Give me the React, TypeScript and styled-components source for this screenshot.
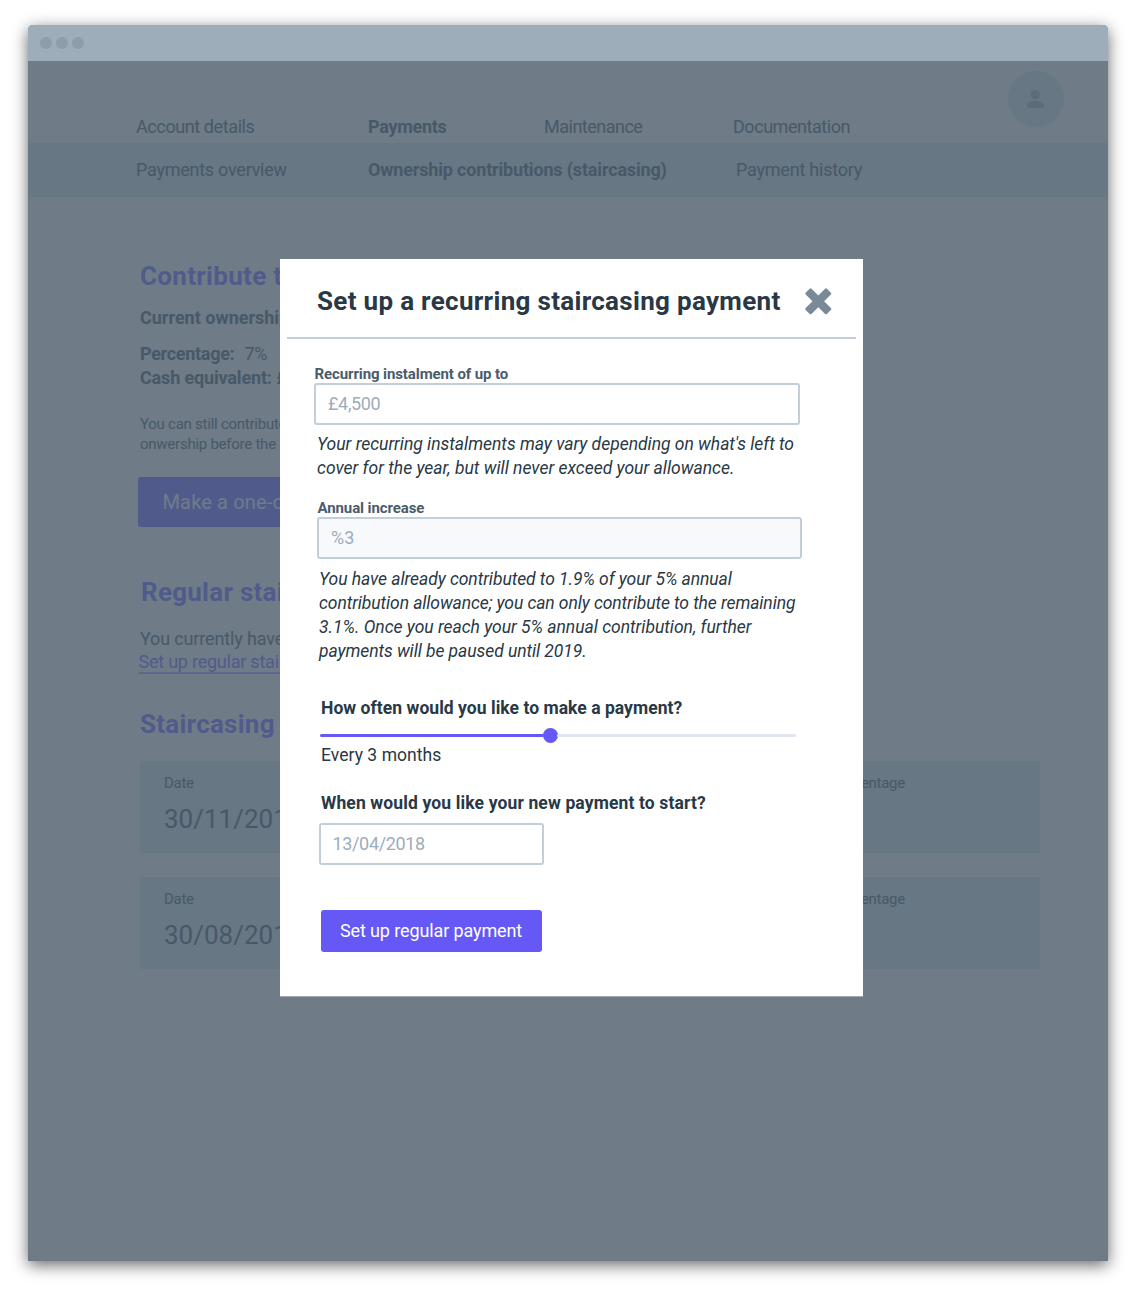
import React from "react";
import styled, { createGlobalStyle } from "styled-components";

const Global = createGlobalStyle`
  * { box-sizing: border-box; }
  body {
    margin: 0;
    background: #fff;
    font-family: Roboto, "Liberation Sans", sans-serif;
  }
  h1, h2, h3, p { margin: 0; }
`;

const c = {
  ink: "#283845",
  label: "#4a5c6c",
  line: "#c2ced9",
  hint: "#9dadbb",
  accent: "#6558f5",
  shade: "#6f7b86",
  shadeBlue: "#677783",
  shadeText: "#475969",
  shadeAccent: "#515b8b",
};

const Stage = styled.div`
  padding: 25px 28px 31px;
  height: 1292px;
  overflow: hidden;
`;

const Browser = styled.div`
  position: relative;
  width: 1080px;
  height: 1236px;
  background: ${c.shade};
  border-radius: 5px 5px 0 0;
  box-shadow: 0 4px 16px rgba(0, 0, 0, 0.6);
`;

const TitleBar = styled.div`
  display: flex;
  align-items: center;
  gap: 4px;
  height: 36px;
  padding-left: 12px;
  background: #9dadb9;
  border-radius: 5px 5px 0 0;
`;

const Dot = styled.i`
  width: 12px;
  height: 12px;
  border-radius: 50%;
  background: #8c9dac;
`;

const Header = styled.header`
  display: flex;
  justify-content: space-between;
  height: 82px;
  padding: 10px 44px 0 108px;
`;

const Nav = styled.nav`
  display: flex;
  padding-top: 44px;
`;

const SubNav = styled.nav`
  display: flex;
  height: 54px;
  padding: 15px 0 0 108px;
  background: ${c.shadeBlue};
`;

const NavItem = styled.a<{ $w: number; $ls?: number; $on?: boolean }>`
  width: ${(p) => p.$w}px;
  font-size: 18px;
  line-height: 24px;
  white-space: nowrap;
  color: ${c.shadeText};
  font-weight: ${(p) => (p.$on ? 700 : 400)};
  letter-spacing: ${(p) => p.$ls ?? 0}px;
`;

const Avatar = styled.div`
  display: flex;
  align-items: center;
  justify-content: center;
  width: 56px;
  height: 56px;
  border-radius: 50%;
  background: ${c.shadeBlue};
`;

const Main = styled.main`
  width: 1012px;
  padding: 63px 0 0 112px;
`;

const Heading = styled.h2<{ $top?: number; $ls?: number; $indent?: number }>`
  margin: ${(p) => p.$top ?? 0}px 0 0 ${(p) => p.$indent ?? 0}px;
  font-size: 26px;
  line-height: 32px;
  font-weight: 700;
  color: ${c.shadeAccent};
  letter-spacing: ${(p) => p.$ls ?? 0}px;
`;

const Text = styled.p<{ $top?: number; $ls?: number; $small?: boolean }>`
  margin-top: ${(p) => p.$top ?? 0}px;
  font-size: ${(p) => (p.$small ? 15 : 18)}px;
  line-height: ${(p) => (p.$small ? 20 : 24)}px;
  color: ${c.shadeText};
  letter-spacing: ${(p) => p.$ls ?? 0}px;
`;

const Term = styled.b<{ $gap?: number }>`
  margin-right: ${(p) => p.$gap ?? 0}px;
`;

const PageButton = styled.button`
  display: block;
  margin: 23px 0 0 -2.5px;
  width: 260px;
  height: 50px;
  padding: 0 0 0 25px;
  border: 0;
  border-radius: 3px;
  background: ${c.shadeAccent};
  color: #6f7c88;
  font: 400 20px/50px Roboto, "Liberation Sans", sans-serif;
  letter-spacing: 0.15px;
  text-align: left;
`;

const PageLink = styled.a`
  display: block;
  width: 150px;
  margin: -1px 0 0 -1.5px;
  height: 24px;
  font-size: 18px;
  line-height: 24px;
  letter-spacing: -0.23px;
  white-space: nowrap;
  color: ${c.shadeAccent};
  border-bottom: 2px solid #5d678b;
`;

const Card = styled.section<{ $top: number }>`
  display: grid;
  grid-template-columns: 334px 334px 1fr;
  width: 900px;
  height: 92px;
  margin-top: ${(p) => p.$top}px;
  padding: 12px 24px 0;
  background: ${c.shadeBlue};
`;

const CardLabel = styled.div`
  font-size: 15px;
  line-height: 20px;
  letter-spacing: -0.3px;
  color: ${c.shadeText};
`;

const CardValue = styled.div`
  margin-top: 10px;
  font-size: 26px;
  line-height: 32px;
  color: ${c.shadeText};
`;

const Modal = styled.div`
  position: absolute;
  left: 252px;
  top: 234px;
  width: 583px;
  height: 737px;
  background: #fff;
  box-shadow: 0 1px 0 #a3acb4;
`;

const ModalHeader = styled.div`
  display: flex;
  justify-content: space-between;
  height: 80px;
  margin: 0 7px;
  padding: 26px 23.5px 0 30px;
  border-bottom: 2px solid ${c.line};
  svg { margin-top: 3px; }
`;

const ModalTitle = styled.h1`
  font-size: 26px;
  line-height: 32px;
  font-weight: 700;
  color: ${c.ink};
  white-space: nowrap;
  letter-spacing: 0.31px;
`;

const ModalBody = styled.form`
  display: flex;
  flex-direction: column;
  align-items: flex-start;
  padding: 25px 0 0 34px;
`;

const Field = styled.div<{ $top?: number; $x?: number }>`
  margin: ${(p) => p.$top ?? 0}px 0 0 ${(p) => p.$x ?? 0}px;
`;

const Label = styled.label`
  display: block;
  height: 19px;
  margin-left: 0.5px;
  font-size: 15px;
  line-height: 20px;
  font-weight: 700;
  color: ${c.label};
  letter-spacing: -0.1px;
`;

const Input = styled.div<{ $w: number; $muted?: boolean; $ls?: number }>`
  width: ${(p) => p.$w}px;
  height: 42px;
  padding-left: 12px;
  border: 2px solid ${c.line};
  border-radius: 3px;
  background: ${(p) => (p.$muted ? "#f7f9fb" : "#fff")};
  font-size: 18px;
  line-height: 38px;
  color: ${c.hint};
  letter-spacing: ${(p) => p.$ls ?? 0}px;
`;

const Help = styled.p<{ $top: number; $x: number }>`
  margin: ${(p) => p.$top}px 0 0 ${(p) => p.$x}px;
  font-size: 17.5px;
  line-height: 24px;
  font-style: italic;
  color: ${c.ink};
`;

const Line = styled.span<{ $ls?: number }>`
  display: block;
  white-space: nowrap;
  letter-spacing: ${(p) => p.$ls ?? 0}px;
`;

const Question = styled.h3<{ $top: number; $ls?: number }>`
  margin: ${(p) => p.$top}px 0 0 7px;
  font-size: 17.5px;
  line-height: 24px;
  font-weight: 700;
  color: ${c.ink};
  letter-spacing: ${(p) => p.$ls ?? 0}px;
`;

const Slider = styled.div`
  display: flex;
  align-items: center;
  width: 476.5px;
  height: 15px;
  margin: 8px 0 0 5.5px;
`;

const Track = styled.div<{ $on?: boolean }>`
  flex: ${(p) => (p.$on ? "0 0 224.5px" : "1")};
  height: 3px;
  border-radius: 2px;
  background: ${(p) => (p.$on ? c.accent : "#e0e6ed")};
`;

const Thumb = styled.div`
  width: 15px;
  height: 15px;
  margin: 0 -1px;
  border-radius: 50%;
  background: ${c.accent};
`;

const SliderValue = styled.div`
  margin: 0 0 0 7px;
  font-size: 17.5px;
  line-height: 24px;
  color: ${c.ink};
  letter-spacing: 0.05px;
`;

const Submit = styled.button`
  width: 221px;
  height: 42px;
  margin: 45px 0 0 6.5px;
  padding: 0;
  border: 0;
  border-radius: 3px;
  background: ${c.accent};
  color: #fff;
  font: 400 18px/42px Roboto, "Liberation Sans", sans-serif;
  letter-spacing: -0.12px;
`;

const PersonIcon = () => (
  <svg width="20" height="20" viewBox="0 0 20 20" fill="#5b6c7b">
    <circle cx="9.4" cy="5.6" r="4.700" />
    <path d="M.9 18v-1.200c0-3 4.200-5.100 8.500-5.100s8.500 2.100 8.500 5.100v1.200c0 .5-.3.9-.9.9H1.800c-.6 0-.9-.4-.9-.9z" />
  </svg>
);

const CloseIcon = () => (
  <svg width="28" height="27" viewBox="0 0 28 27" fill="#7a8997">
    <rect x="-1.700" y="9.200" width="30" height="8.200" rx="1.300" transform="rotate(45 13.300 13.300)" />
    <rect x="-1.700" y="9.200" width="30" height="8.200" rx="1.300" transform="rotate(-45 13.300 13.300)" />
  </svg>
);

const contributions = ["30/11/2017", "30/08/2017"];

export default function App() {
  return (
    <Stage>
      <Global />
      <Browser>
        <TitleBar>
          <Dot />
          <Dot />
          <Dot />
        </TitleBar>
        <Header>
          <Nav>
            <NavItem $w={232} $ls={-0.4}>Account details</NavItem>
            <NavItem $w={176} $ls={-0.3} $on>Payments</NavItem>
            <NavItem $w={189} $ls={-0.5}>Maintenance</NavItem>
            <NavItem $w={130} $ls={-0.45}>Documentation</NavItem>
          </Nav>
          <Avatar>
            <PersonIcon />
          </Avatar>
        </Header>
        <SubNav>
          <NavItem $w={232} $ls={-0.25}>Payments overview</NavItem>
          <NavItem $w={368} $ls={-0.17} $on>Ownership contributions (staircasing)</NavItem>
          <NavItem $w={130} $ls={-0.22}>Payment history</NavItem>
        </SubNav>
        <Main>
          <Heading $ls={0.3}>Contribute to</Heading>
          <Text $top={14}><Term>Current ownership</Term></Text>
          <Text $top={12} $ls={-0.3}><Term $gap={6}>Percentage:</Term> 7%</Text>
          <Text $ls={-0.16}><Term $gap={4.5}>Cash equivalent:</Term>£</Text>
          <Text $top={24} $ls={-0.25} $small>
            You can still contribute
            <br />
            onwership before the
          </Text>
          <PageButton>Make a one-off</PageButton>
          <Heading $top={49} $indent={1} $ls={0.25}>Regular stair</Heading>
          <Text $top={19} $ls={-0.15}>You currently have</Text>
          <PageLink>Set up regular stair</PageLink>
          <Heading $top={34} $ls={0.25}>Staircasing</Heading>
          {contributions.map((date, i) => (
            <Card key={date} $top={i === 0 ? 21 : 24}>
              <div>
                <CardLabel>Date</CardLabel>
                <CardValue>{date}</CardValue>
              </div>
              <div />
              <CardLabel>Percentage</CardLabel>
            </Card>
          ))}
        </Main>
        <Modal>
          <ModalHeader>
            <ModalTitle>Set up a recurring staircasing payment</ModalTitle>
            <CloseIcon />
          </ModalHeader>
          <ModalBody>
            <Field>
              <Label>Recurring instalment of up to</Label>
              <Input $w={486} $ls={-0.35}>£4,500</Input>
            </Field>
            <Help $top={7} $x={3}>
              <Line $ls={-0.02}>Your recurring instalments may vary depending on what's left to</Line>
              <Line>cover for the year, but will never exceed your allowance.</Line>
            </Help>
            <Field $top={18} $x={3}>
              <Label>Annual increase</Label>
              <Input $w={485.400} $muted>%3</Input>
            </Field>
            <Help $top={8} $x={5}>
              <Line $ls={-0.06}>You have already contributed to 1.9% of your 5% annual</Line>
              <Line $ls={-0.09}>contribution allowance; you can only contribute to the remaining</Line>
              <Line $ls={-0.02}>3.1%. Once you reach your 5% annual contribution, further</Line>
              <Line $ls={-0.07}>payments will be paused until 2019.</Line>
            </Help>
            <Question $top={33} $ls={0.04}>How often would you like to make a payment?</Question>
            <Slider>
              <Track $on />
              <Thumb />
              <Track />
            </Slider>
            <SliderValue>Every 3 months</SliderValue>
            <Question $top={24} $ls={0.13}>When would you like your new payment to start?</Question>
            <Field $top={8} $x={4.5}>
              <Input $w={225} $ls={-0.35}>13/04/2018</Input>
            </Field>
            <Submit type="button">Set up regular payment</Submit>
          </ModalBody>
        </Modal>
      </Browser>
    </Stage>
  );
}
